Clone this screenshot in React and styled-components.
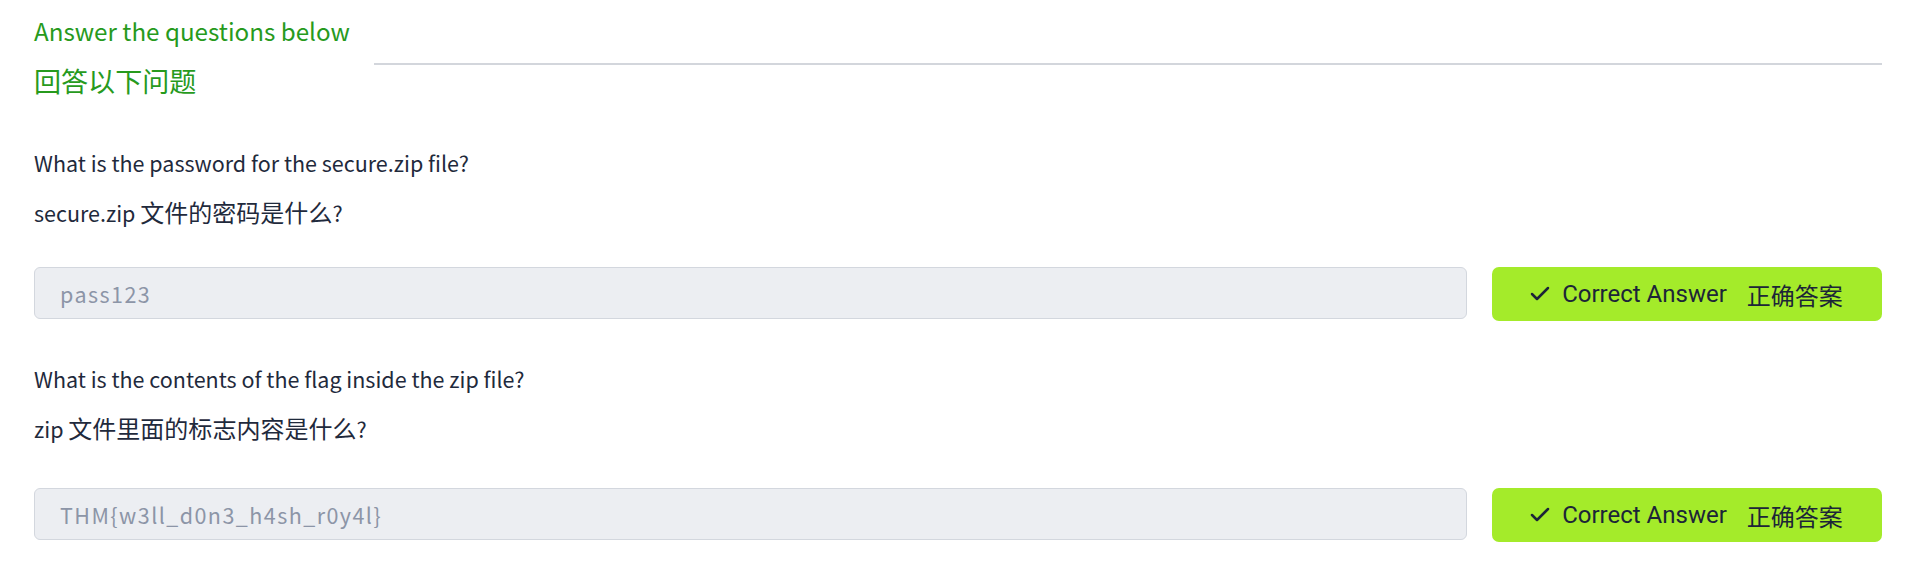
import React from "react";
import styled, { createGlobalStyle } from "styled-components";
import { Check } from "lucide-react";

// Noto Sans CJK's latin glyphs are drawn ~1.12x larger than Source Sans,
// so latin text is set smaller and CJK runs are scaled back up.
const GlobalStyle = createGlobalStyle`
  html, body {
    margin: 0;
    padding: 0;
    background: #fff;
  }
  body {
    font-family: "Noto Sans CJK SC", "Lato", sans-serif;
    color: #1f2a3c;
  }
`;

const Page = styled.div`
  padding: 6px 27px 32px 34px;
`;

const Header = styled.div`
  display: flex;
  align-items: flex-start;
`;

const HeaderTitle = styled.div`
  flex: 0 0 340px;
  color: #279a1d;
  font-size: 24.2px;
  line-height: 50px;
  white-space: nowrap;
`;

const Divider = styled.div`
  flex: 1;
  height: 2px;
  margin-top: 57px;
  background: #d3d6dc;
`;

const Cjk = styled.span`
  font-size: 1.118em;
`;

const Question = styled.div`
  margin-top: ${(p) => p.$space}px;
  font-size: 21.5px;
  line-height: 49px;
  color: #1f2a3c;
`;

const AnswerRow = styled.div`
  display: flex;
  align-items: flex-start;
  gap: 25px;
  margin-top: ${(p) => p.$space}px;
`;

const AnswerInput = styled.div`
  flex: 1;
  height: 52px;
  box-sizing: border-box;
  display: flex;
  align-items: center;
  padding: 0 25px;
  background: #eceef2;
  border: 1px solid #d3d7de;
  border-radius: 6px;
  color: #8c95a7;
  font-size: 21.5px;
  letter-spacing: 1.45px;
`;

const CorrectButton = styled.div`
  flex: 0 0 390px;
  height: 54px;
  box-sizing: border-box;
  display: flex;
  align-items: center;
  justify-content: center;
  background: #a4eb2a;
  border-radius: 7px;
  color: #1c2538;
  font-size: 24px;
  font-family: "Roboto", "Noto Sans CJK SC", sans-serif;

  & > svg {
    margin-left: -3px;
    margin-right: 10px;
  }
`;

const ButtonCn = styled.span`
  margin-left: 20px;
  font-family: "Noto Sans CJK SC", sans-serif;
`;

function Mixed({ text }) {
  return text
    .split(/([\u4e00-\u9fff]+)/)
    .filter(Boolean)
    .map((part, i) =>
      /[\u4e00-\u9fff]/.test(part) ? <Cjk key={i}>{part}</Cjk> : part
    );
}

const questions = [
  {
    en: "What is the password for the secure.zip file?",
    cn: "secure.zip 文件的密码是什么?",
    answer: "pass123",
    qSpace: 31,
    rowSpace: 30,
  },
  {
    en: "What is the contents of the flag inside the zip file?",
    cn: "zip 文件里面的标志内容是什么?",
    answer: "THM{w3ll_d0n3_h4sh_r0y4l}",
    qSpace: 33,
    rowSpace: 35,
  },
];

export default function App() {
  return (
    <>
      <GlobalStyle />
      <Page>
        <Header>
          <HeaderTitle>
            <div>Answer the questions below</div>
            <div>
              <Mixed text="回答以下问题" />
            </div>
          </HeaderTitle>
          <Divider />
        </Header>
        {questions.map((q) => (
          <React.Fragment key={q.answer}>
            <Question $space={q.qSpace}>
              <div>{q.en}</div>
              <div>
                <Mixed text={q.cn} />
              </div>
            </Question>
            <AnswerRow $space={q.rowSpace}>
              <AnswerInput>{q.answer}</AnswerInput>
              <CorrectButton>
                <Check size={24} strokeWidth={2.5} />
                Correct Answer
                <ButtonCn>正确答案</ButtonCn>
              </CorrectButton>
            </AnswerRow>
          </React.Fragment>
        ))}
      </Page>
    </>
  );
}
